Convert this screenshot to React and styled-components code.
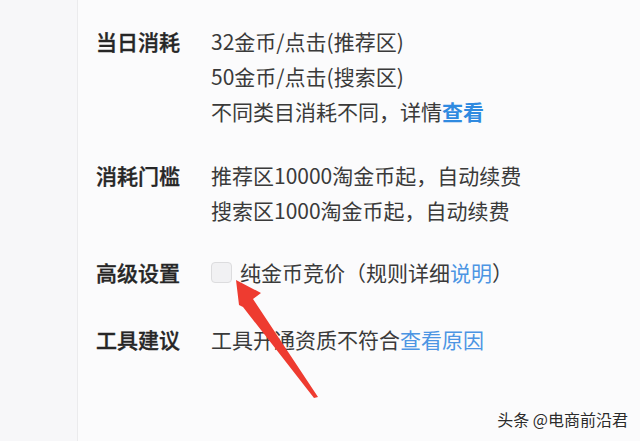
import React from "react";
import styled, { createGlobalStyle } from "styled-components";

const Global = createGlobalStyle`
  html, body { margin: 0; padding: 0; }
  body {
    width: 640px;
    height: 441px;
    overflow: hidden;
    background: #fbfbfc;
    font-family: "Noto Sans CJK SC", "Noto Sans", sans-serif;
  }
`;

const Page = styled.div`
  position: relative;
  display: flex;
  width: 640px;
  height: 441px;
  background: #fbfbfc;
`;

const Sidebar = styled.aside`
  width: 77px;
  flex: none;
  background: #f7f7f9;
  border-right: 1px solid #ebebed;
`;

const Main = styled.main`
  flex: 1;
  display: flex;
  flex-direction: column;
  padding: 24px 0 0 18px;
`;

const Row = styled.div`
  display: flex;
  margin-top: ${(p) => p.$top || 0}px;
`;

const Label = styled.div`
  width: 115px;
  flex: none;
  font-size: 21px;
  line-height: 35px;
  font-weight: 500;
  color: #262626;
  -webkit-text-stroke: 0.35px #262626;
`;

const Lines = styled.div`
  display: flex;
  flex-direction: column;
`;

const Line = styled.div`
  display: flex;
  align-items: center;
  font-size: 21px;
  line-height: 35px;
  color: #3a3a3a;
  white-space: nowrap;
`;

const Link = styled.span`
  color: ${(p) => (p.$strong ? "#2f8ae0" : "#4c95e3")};
  font-weight: ${(p) => (p.$strong ? 700 : 400)};
`;

const Check = styled.span`
  width: 21px;
  height: 21px;
  box-sizing: border-box;
  border: 1px solid #dcdcde;
  border-radius: 4px;
  background: #f1f1f3;
  margin-right: 8px;
  flex: none;
`;

const Watermark = styled.div`
  position: absolute;
  right: 12px;
  bottom: 12px;
  font-size: 16px;
  line-height: 20px;
  color: #2b2b2b;
  text-shadow: 0 0 2px #fff, 0 0 2px #fff;
`;

const ArrowLayer = styled.svg`
  position: absolute;
  left: 0;
  top: 0;
  pointer-events: none;
`;

export default function App() {
  return (
    <>
      <Global />
      <Page>
        <Sidebar />
        <Main>
          <Row>
            <Label>当日消耗</Label>
            <Lines>
              <Line>32金币/点击(推荐区)</Line>
              <Line>50金币/点击(搜索区)</Line>
              <Line>
                不同类目消耗不同，详情<Link $strong>查看</Link>
              </Line>
            </Lines>
          </Row>
          <Row $top={29}>
            <Label>消耗门槛</Label>
            <Lines>
              <Line>推荐区10000淘金币起，自动续费</Line>
              <Line>搜索区1000淘金币起，自动续费</Line>
            </Lines>
          </Row>
          <Row $top={27}>
            <Label>高级设置</Label>
            <Lines>
              <Line>
                <Check />
                纯金币竞价（规则详细<Link>说明</Link>）
              </Line>
            </Lines>
          </Row>
          <Row $top={32}>
            <Label>工具建议</Label>
            <Lines>
              <Line>
                工具开通资质不符合<Link>查看原因</Link>
              </Line>
            </Lines>
          </Row>
        </Main>
        <ArrowLayer width="640" height="441" viewBox="0 0 640 441">
          <polygon
            points="236,280 261,293 253,299 318,397 314,398 243,307 239,305"
            fill="#ee3b30"
          />
        </ArrowLayer>
        <Watermark>头条 @电商前沿君</Watermark>
      </Page>
    </>
  );
}
